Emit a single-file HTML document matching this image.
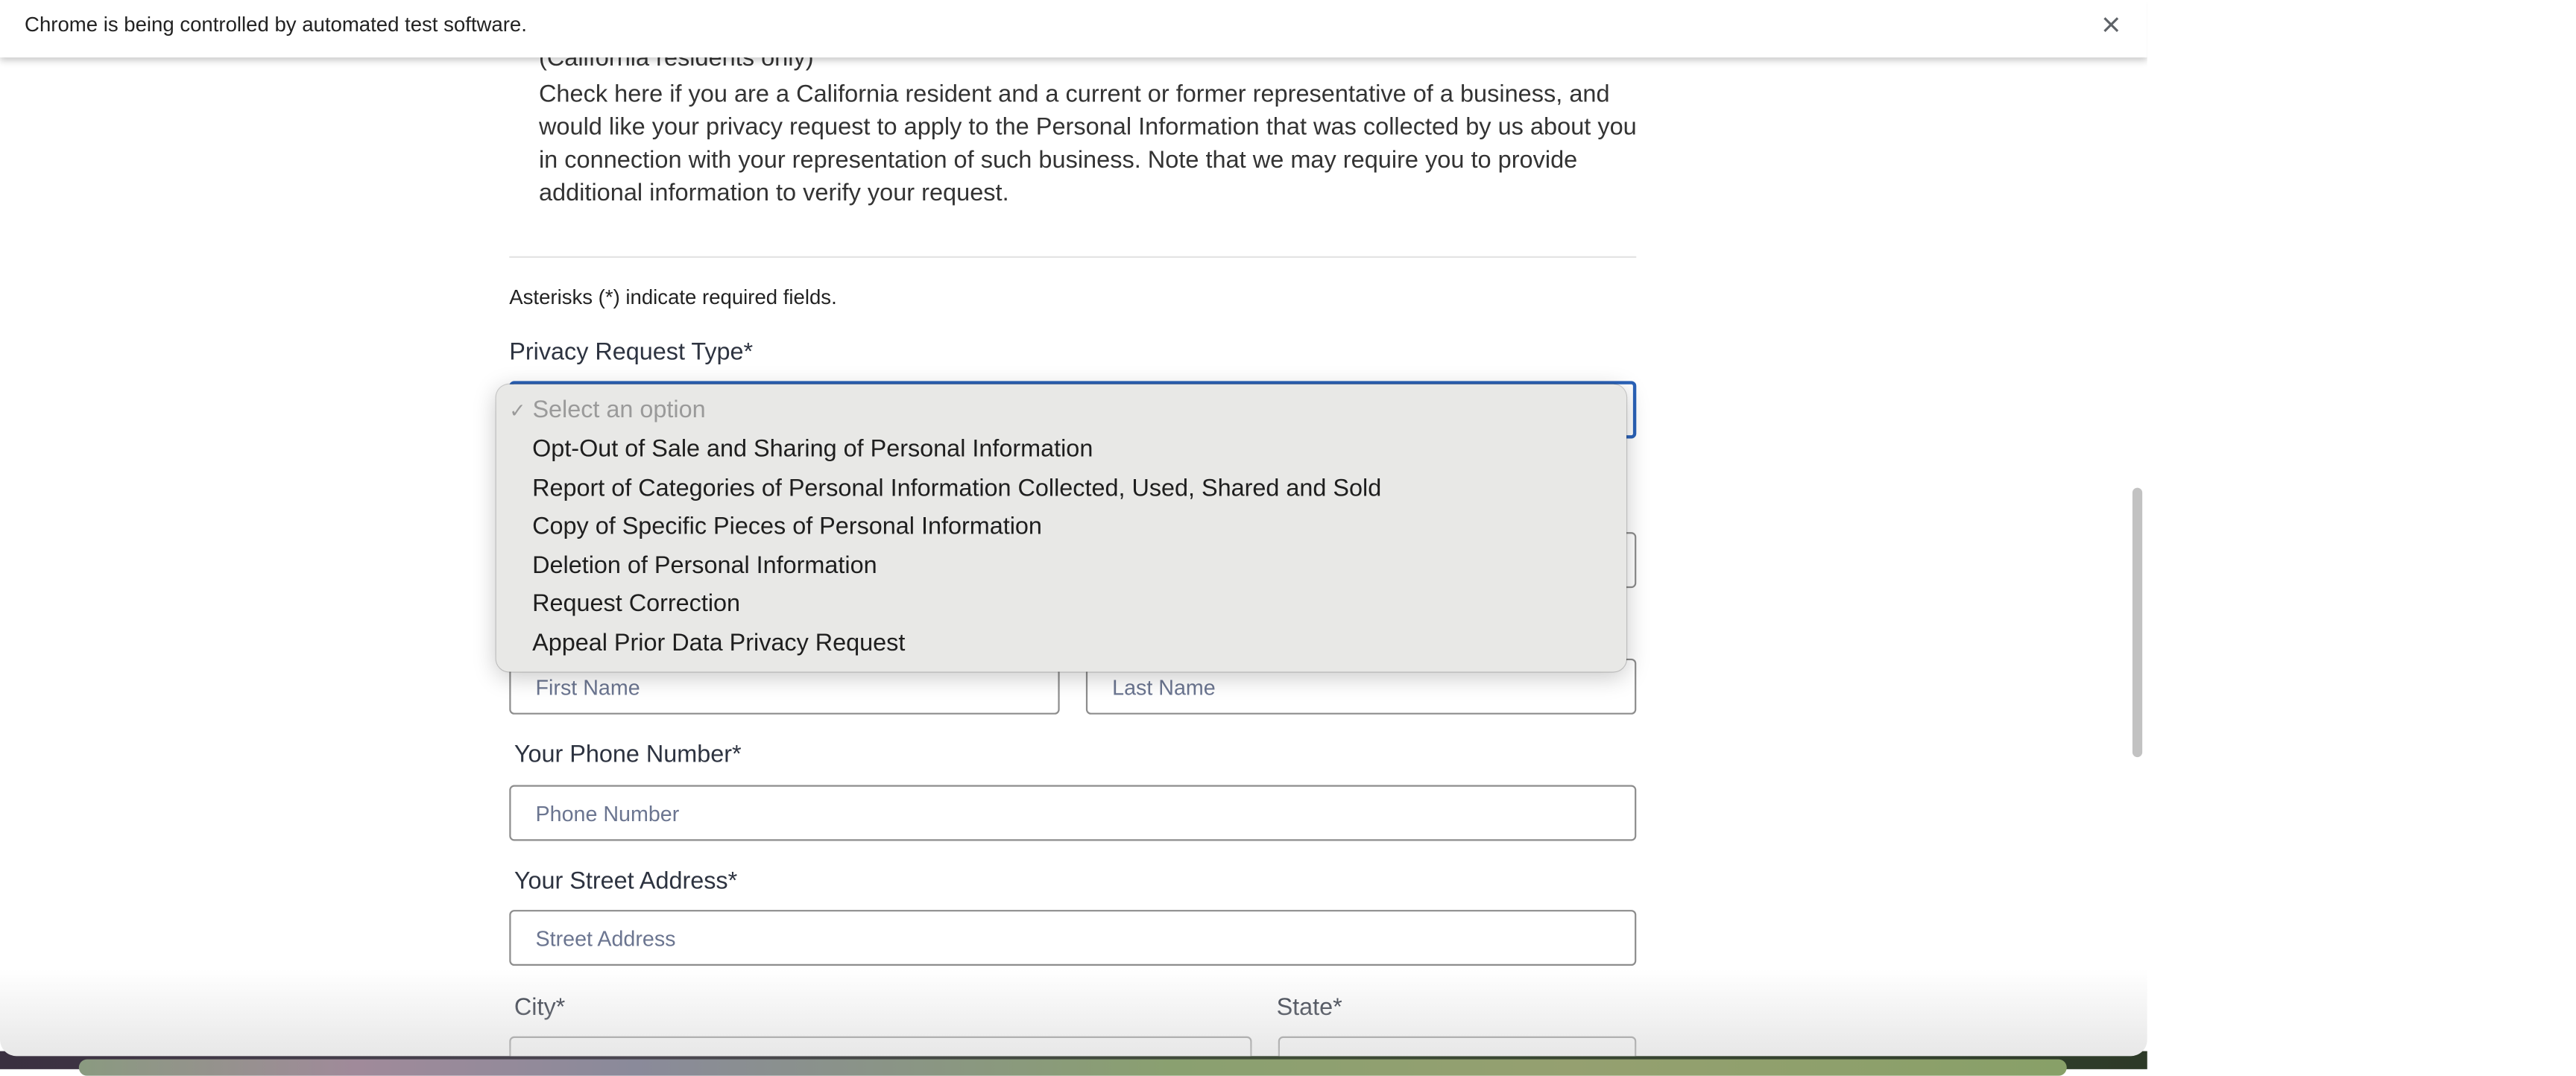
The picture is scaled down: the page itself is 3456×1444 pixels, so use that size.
<!DOCTYPE html>
<html><head><meta charset="utf-8"><style>
html,body{margin:0;padding:0;background:#fff;width:3456px;height:1435px;overflow:hidden;font-family:"Liberation Sans",Arial,sans-serif;}
#w{position:absolute;left:0;top:0;width:1568px;height:651px;transform:scale(2.2041);transform-origin:0 0;}
.a{position:absolute;white-space:nowrap;}
#desk{position:absolute;left:0;top:640px;width:1307px;height:11px;background:linear-gradient(90deg,#3a3040,#4a4650 30%,#3d4a35 60%,#2d3a28);}
#dbar{position:absolute;left:48px;top:645px;width:1210px;height:10px;border-radius:6px;background:linear-gradient(90deg,#8a9a80,#a08a9a 14%,#8a8a9a 28%,#8aa070 55%,#95a070 75%,#88a068);}
#win{position:absolute;left:0;top:0;width:1307px;height:643px;background:#fff;border-radius:0 0 10px 10px;overflow:hidden;}
#bar{position:absolute;left:0;top:0;width:1307px;height:35px;background:#fff;box-shadow:0 2px 4px rgba(0,0,0,.22);z-index:5;}
.p{font-size:14.75px;color:#333;}
.lbl{font-size:14.7px;color:#2d3340;}
.inp{position:absolute;border:1px solid #8d8d8d;border-radius:3px;background:#fff;box-sizing:border-box;}
.ph{position:absolute;left:15px;top:9px;font-size:13px;color:#6b7590;}
#dd{position:absolute;left:302px;top:234px;width:688px;height:175px;background:#e8e8e6;border-radius:8px;box-shadow:0 3px 14px rgba(0,0,0,.22),0 0 0 .5px rgba(0,0,0,.18);z-index:4;}
.o{position:absolute;left:22px;font-size:14.7px;color:#1e1e1e;}
#sb{position:absolute;left:1298px;top:297px;width:6px;height:164px;border-radius:3px;background:#c2c2c2;}
#fade{position:absolute;left:0;top:590px;width:1307px;height:53px;background:linear-gradient(rgba(230,230,230,0),rgba(215,215,215,.6));z-index:3;}
</style></head><body><div id="w">
<div id="desk"></div><div id="dbar"></div>
<div id="win">
<div id="bar"><div class="a" style="left:15px;top:8px;font-size:12.5px;color:#222;">Chrome is being controlled by automated test software.</div>
<svg class="a" style="left:1280px;top:10px" width="10" height="10" viewBox="0 0 10 10"><path d="M1 1L9 9M9 1L1 9" stroke="#5f6368" stroke-width="1.4"/></svg></div>
<div class="a p" style="left:328px;top:28px;">(California residents only)</div>
<div class="a p" style="left:328px;top:48px;line-height:20px;">Check here if you are a California resident and a current or former representative of a business, and<br>would like your privacy request to apply to the Personal Information that was collected by us about you<br>in connection with your representation of such business. Note that we may require you to provide<br>additional information to verify your request.</div>
<div class="a" style="left:310px;top:156px;width:686px;height:1px;background:#e3e3e3;"></div>
<div class="a" style="left:310px;top:174px;font-size:12.5px;color:#222;">Asterisks (*) indicate required fields.</div>
<div class="a lbl" style="left:310px;top:207px;">Privacy Request Type*</div>
<div class="inp" style="left:310px;top:232px;width:686px;height:35px;border:2px solid #2a62b8;"></div>
<div class="inp" style="left:310px;top:324px;width:686px;height:34px;"></div>
<div class="inp" style="left:310px;top:401px;width:335px;height:34px;"><div class="ph">First Name</div></div>
<div class="inp" style="left:661px;top:401px;width:335px;height:34px;"><div class="ph">Last Name</div></div>
<div class="a lbl" style="left:313px;top:452px;">Your Phone Number*</div>
<div class="inp" style="left:310px;top:478px;width:686px;height:34px;"><div class="ph">Phone Number</div></div>
<div class="a lbl" style="left:313px;top:529px;">Your Street Address*</div>
<div class="inp" style="left:310px;top:554px;width:686px;height:34px;"><div class="ph">Street Address</div></div>
<div class="a lbl" style="left:313px;top:606px;">City*</div>
<div class="a lbl" style="left:777px;top:606px;">State*</div>
<div class="inp" style="left:310px;top:631px;width:452px;height:34px;"></div>
<div class="inp" style="left:778px;top:631px;width:218px;height:34px;"></div>
<div id="dd">
<div class="o" style="left:8px;top:8px;color:#9a9a9a;"><span style="font-size:12px">✓</span> Select an option</div>
<div class="o" style="top:32px;">Opt-Out of Sale and Sharing of Personal Information</div>
<div class="o" style="top:56px;">Report of Categories of Personal Information Collected, Used, Shared and Sold</div>
<div class="o" style="top:79px;">Copy of Specific Pieces of Personal Information</div>
<div class="o" style="top:103px;">Deletion of Personal Information</div>
<div class="o" style="top:126px;">Request Correction</div>
<div class="o" style="top:150px;">Appeal Prior Data Privacy Request</div>
</div>
<div id="sb"></div>
<div id="fade"></div>
</div>
</div></body></html>
